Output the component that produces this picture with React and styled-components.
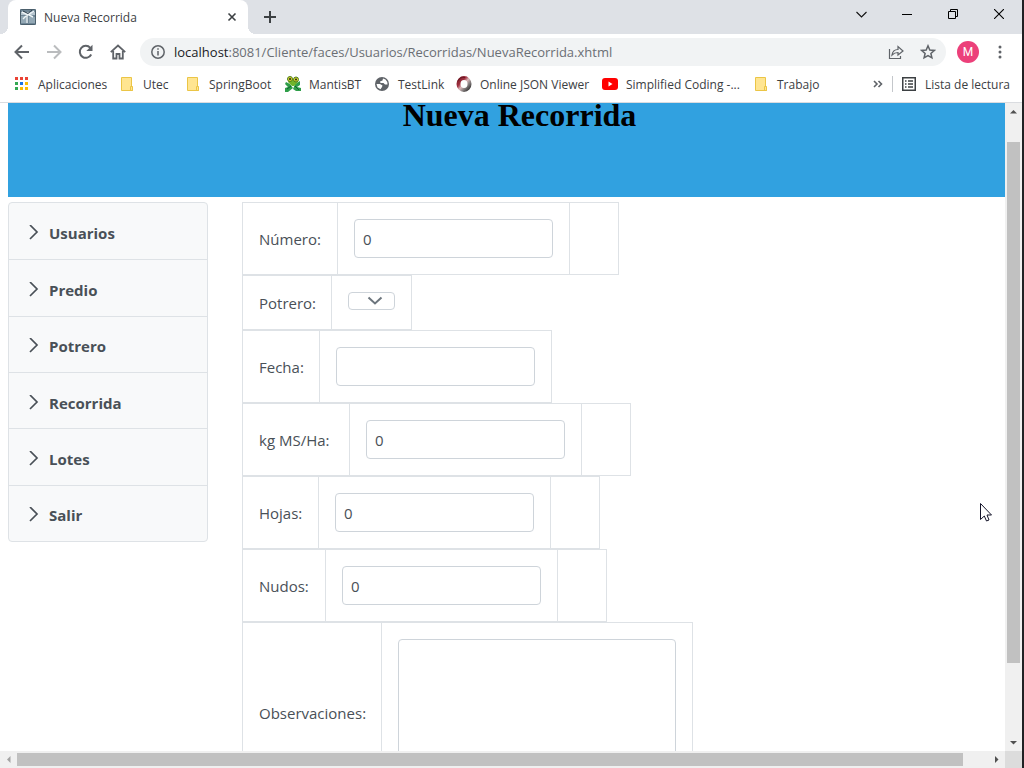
import React from "react";
import styled, { createGlobalStyle } from "styled-components";

const GlobalStyle = createGlobalStyle`
  *, *::before, *::after { box-sizing: border-box; }
  body { margin: 0; background: #fff; }
  button, input, select, textarea { font: inherit; color: inherit; margin: 0; }
  button { padding: 0; border: 0; background: none; }
  svg { display: block; flex: none; }
`;

const Window = styled.div`
  display: flex;
  flex-direction: column;
  height: 100vh;
  border-right: 2px solid #202124;
  background: #fff;
  color: #3c4043;
  font-family: "Open Sans", "Noto Sans", sans-serif;
  font-size: 12px;
`;

/* ---------- browser chrome ---------- */

const TabStrip = styled.div`
  display: flex;
  flex: none;
  height: 34px;
  padding-left: 8px;
  background: #dee1e6;
`;

const Tab = styled.div`
  position: relative;
  display: flex;
  align-items: center;
  width: 240px;
  padding: 0 8px 0 12px;
  border-radius: 8px 8px 0 0;
  background: #fff;

  &::before, &::after {
    content: "";
    position: absolute;
    bottom: 0;
    width: 8px;
    height: 8px;
  }
  &::before {
    left: -8px;
    background: radial-gradient(circle at 0 0, #dee1e6 8px, #fff 8px);
  }
  &::after {
    right: -8px;
    background: radial-gradient(circle at 100% 0, #dee1e6 8px, #fff 8px);
  }
`;

const TabTitle = styled.span`
  flex: 1;
  margin-left: 8px;
`;

const IconButton = styled.button`
  display: flex;
  flex: none;
  align-items: center;
  justify-content: center;
  width: ${(p) => p.$width || 32}px;
  height: ${(p) => p.$height || 28}px;
  color: ${(p) => p.$color || "#5f6368"};
`;

const WindowControls = styled.div`
  display: flex;
  margin-left: auto;
`;

const Toolbar = styled.div`
  display: flex;
  flex: none;
  align-items: center;
  height: 36px;
  padding: 0 6px;
`;

const AddressBar = styled.div`
  display: flex;
  flex: 1;
  align-items: center;
  height: 28px;
  margin: 0 6px;
  padding: 0 2px 0 10px;
  border-radius: 14px;
  background: #f1f3f4;
`;

const Address = styled.div`
  flex: 1;
  margin-left: 8px;
  color: #6b6f74;
  font-size: 13px;
  white-space: nowrap;
`;

const Host = styled.span`
  color: #202124;
`;

const Avatar = styled.button`
  width: 22px;
  height: 22px;
  margin: 0 5px;
  border-radius: 50%;
  background: #ec407a;
  color: #fff;
  font-family: Roboto, sans-serif;
  font-size: 12px;
  line-height: 22px;
`;

const BookmarkBar = styled.nav`
  display: flex;
  flex: none;
  align-items: center;
  height: 33px;
  padding: 0 12px 4px 14px;
  border-bottom: 1px solid #dadce0;
`;

const Bookmark = styled.a`
  display: flex;
  flex: none;
  align-items: center;
  gap: 8px;
  width: ${(p) => (p.$width ? p.$width + "px" : "auto")};
  color: #3c4043;
  font-size: 12px;
  text-decoration: none;
  white-space: nowrap;
`;

const BookmarkEnd = styled.div`
  display: flex;
  align-items: center;
  gap: 8px;
  margin-left: auto;
`;

const Divider = styled.div`
  width: 1px;
  height: 16px;
  background: #c4c7cb;
`;

/* ---------- scrollable page frame ---------- */

const Frame = styled.div`
  display: grid;
  flex: 1;
  grid-template-columns: minmax(0, 1fr) 17px;
  grid-template-rows: minmax(0, 1fr) 17px;
  min-height: 0;
`;

const Viewport = styled.div`
  position: relative;
  overflow: hidden;
`;

const ScrollBar = styled.div`
  display: flex;
  flex-direction: ${(p) => (p.$vertical ? "column" : "row")};
  align-items: center;
  background: #f0f0f0;
`;

const ScrollArrow = styled.div`
  display: flex;
  flex: none;
  align-items: center;
  justify-content: center;
  width: 17px;
  height: 17px;
  color: ${(p) => (p.$disabled ? "#a3a3a3" : "#505050")};
`;

const Track = styled.div`
  flex: ${(p) => p.$share} 0 0;
`;

const Thumb = styled.div`
  flex: ${(p) => p.$share} 0 0;
  width: 13px;
  height: 13px;
  background: #c1c1c1;
`;

const Corner = styled.div`
  background: #dcdcdc;
`;

/* ---------- page ---------- */

const Page = styled.div`
  width: calc(100% + 26px);
  padding-left: 8px;
`;

const Banner = styled.header`
  height: 94px;
  background: #31a1e0;
`;

const Title = styled.h1`
  margin: 0;
  color: #000;
  font-family: "Liberation Serif", serif;
  font-size: 32px;
  font-weight: bold;
  line-height: 24px;
  text-align: center;
`;

const Columns = styled.div`
  display: flex;
  align-items: flex-start;
  gap: 34px;
  padding-top: 5px;
  color: #495057;
  font-size: 15px;
`;

const Menu = styled.nav`
  display: grid;
  flex: none;
  grid-auto-rows: 1fr;
  width: 200px;
  height: 340px;
  border: 1px solid #dee2e6;
  border-radius: 4px;
  background: #f8f9fa;
`;

const MenuItem = styled.a`
  display: flex;
  align-items: center;
  gap: 8px;
  padding: 4px 20px 0 16px;
  color: #495057;
  font-weight: 700;
  text-decoration: none;

  & + & { border-top: 1px solid #dee2e6; }
`;

const Form = styled.form`
  display: flex;
  flex-direction: column;
  align-items: flex-start;
`;

const Row = styled.div`
  display: flex;
  border: 1px solid #dee2e6;
`;

const LabelCell = styled.label`
  display: flex;
  align-items: center;
  width: ${(p) => p.$width}px;
  padding-left: 16px;
  white-space: nowrap;
`;

const Cell = styled.div`
  padding: 16px;
  border-left: 1px solid #dee2e6;
`;

const MessageSlot = styled.div`
  width: 16px;
`;

const TextBox = styled.input`
  display: block;
  width: 199px;
  height: 39px;
  padding: 0 8px;
  border: 1px solid #ced4da;
  border-radius: 4px;
  background: #fff;
`;

const SelectWrap = styled.div`
  position: relative;
  height: 21px;
`;

const Select = styled.select`
  display: block;
  width: 47px;
  height: 18px;
  border: 1px solid #ced4da;
  border-radius: 4px;
  background: #fff;
  appearance: none;
`;

const SelectArrow = styled.svg`
  position: absolute;
  top: 4px;
  right: 12px;
  pointer-events: none;
`;

const TextArea = styled.textarea`
  display: block;
  width: 278px;
  height: 147px;
  padding: 8px;
  border: 1px solid #ced4da;
  border-radius: 4px;
  resize: none;
`;

const Pointer = styled.svg`
  position: absolute;
  right: 13px;
  top: 400px;
`;

/* ---------- icons ---------- */

const Line = ({ size = 16, width = 2, d, children, ...rest }) => (
  <svg width={size} height={size} viewBox={`0 0 ${size} ${size}`} fill="none" stroke="currentColor" strokeWidth={width} {...rest}>
    {d && <path d={d} />}
    {children}
  </svg>
);

const Favicon = () => (
  <svg width="16" height="16" viewBox="0 0 16 16">
    <rect width="16" height="16" rx="1" fill="#6f8696" />
    <path d="M0 3H16V6H0Z" fill="#b5c4ce" />
    <path d="M1 7L6 7V14H1ZM9 8H15V14H9Z" fill="#93a8b5" />
    <path d="M2 3L8 6L14 2M7 6V14M9 6L13 8M6 7L3 10" stroke="#eef4f7" strokeWidth="1.4" fill="none" />
    <path d="M3 2L8 4.500L12 1" stroke="#31414e" strokeWidth="1" fill="none" />
    <rect x=".5" y=".5" width="15" height="15" rx="1" fill="none" stroke="#4b5f6c" />
  </svg>
);

const AppsIcon = () => {
  const colors = ["#ea4335", "#ea4335", "#ea4335", "#34a853", "#1a73e8", "#fbbc04", "#34a853", "#fbbc04", "#fbbc04"];
  return (
    <svg width="16" height="16" viewBox="0 0 16 16">
      {colors.map((c, i) => (
        <rect key={i} x={1 + (i % 3) * 5} y={1 + Math.floor(i / 3) * 5} width="3" height="3" fill={c} />
      ))}
    </svg>
  );
};

const FolderIcon = () => (
  <svg width="16" height="16" viewBox="0 0 16 16">
    <path d="M2.500 1.500H12.500V11H13.500V14.500H2.500Z" fill="#ffe591" stroke="#ebc546" />
    <path d="M11.500 14V10.500H13.500V14.500H11Z" fill="#ffe591" stroke="#ebc546" />
  </svg>
);

const MantisIcon = () => (
  <svg width="16" height="16" viewBox="0 0 16 16">
    <path d="M1 6L5 8L8 12L3 16H0V12L3 11L0 8ZM15 5L10 8L8 13L11 15H16V12L12 11L15 9Z" fill="#2e9e49" />
    <path d="M4 3H12L13 6L9 10H7L3 6Z" fill="#70b52b" />
    <circle cx="5" cy="3" r="2.500" fill="#d9d82b" stroke="#4f7b1d" />
    <circle cx="11" cy="3.500" r="2.500" fill="#d9d82b" stroke="#4f7b1d" />
    <circle cx="5" cy="3" r="1" fill="#222" />
    <circle cx="11" cy="3.500" r="1" fill="#222" />
    <path d="M2 13L6 10M10 10L14 14" stroke="#125d31" />
  </svg>
);

const GlobeIcon = () => (
  <svg width="16" height="16" viewBox="0 0 16 16">
    <circle cx="8" cy="8" r="7" fill="#5f6368" />
    <path d="M9 2.500L8.500 4.500L6 5.500L6.500 7H9.500L11 8.500H13.500L13.300 6L11.500 3.500ZM2.500 8H6L8.500 9.500L8 11L6.500 13.300L3.500 11.500Z" fill="#fff" />
  </svg>
);

const JsonIcon = () => (
  <svg width="16" height="16" viewBox="0 0 16 16" fill="none">
    <defs>
      <linearGradient id="ring" x1="0" y1="0" x2="1" y2="1">
        <stop offset="0" stopColor="#7a1f2a" />
        <stop offset=".3" stopColor="#a03040" />
        <stop offset=".5" stopColor="#dcb8ba" />
        <stop offset=".7" stopColor="#8d8585" />
        <stop offset="1" stopColor="#2f2f2f" />
      </linearGradient>
    </defs>
    <ellipse cx="8" cy="8" rx="5.500" ry="6" stroke="url(#ring)" strokeWidth="4" />
    <path d="M2 5C3 2 6 .8 9 1.500" stroke="#6d1522" strokeWidth="1" />
  </svg>
);

const YouTubeIcon = () => (
  <svg width="16" height="16" viewBox="0 0 16 16">
    <rect y="2" width="16" height="12" rx="3" fill="#f00" />
    <path d="M6.500 5.500V10.500L10.500 8Z" fill="#fff" />
  </svg>
);

const ListIcon = () => (
  <Line size={16} width={1.5}>
    <rect x="1.750" y="1.750" width="12.500" height="12.500" />
    <path d="M4 5H5.500M4 8H5.500M4 11H5.500M7 5H12M7 8H12M7 11H12" />
  </Line>
);

const Arrow = ({ d }) => (
  <svg width="7" height="7" viewBox="0 0 7 7"><path d={d} fill="currentColor" /></svg>
);

/* ---------- data ---------- */

const bookmarks = [
  { name: "Aplicaciones", Icon: AppsIcon, width: 105 },
  { name: "Utec", Icon: FolderIcon, width: 66 },
  { name: "SpringBoot", Icon: FolderIcon, width: 100 },
  { name: "MantisBT", Icon: MantisIcon, width: 89 },
  { name: "TestLink", Icon: GlobeIcon, width: 82 },
  { name: "Online JSON Viewer", Icon: JsonIcon, width: 146 },
  { name: "Simplified Coding -...", Icon: YouTubeIcon, width: 151 },
  { name: "Trabajo", Icon: FolderIcon },
];

const menu = ["Usuarios", "Predio", "Potrero", "Recorrida", "Lotes", "Salir"];

const fields = [
  { id: "numero", label: "Número:", width: 94, value: "0", message: true },
  { id: "potrero", label: "Potrero:", width: 88, kind: "select" },
  { id: "fecha", label: "Fecha:", width: 76, value: "" },
  { id: "kg", label: "kg MS/Ha:", width: 106, value: "0", message: true },
  { id: "hojas", label: "Hojas:", width: 75, value: "0", message: true },
  { id: "nudos", label: "Nudos:", width: 82, value: "0", message: true },
  { id: "observaciones", label: "Observaciones:", width: 138, kind: "area" },
];

function Control({ field }) {
  if (field.kind === "select") {
    return (
      <SelectWrap>
        <Select id={field.id} />
        <SelectArrow width="16" height="10" viewBox="0 0 16 10" fill="none" stroke="#6c757d" strokeWidth="2">
          <path d="M1.500 1.500L8 7.500L14.500 1.500" />
        </SelectArrow>
      </SelectWrap>
    );
  }
  if (field.kind === "area") return <TextArea id={field.id} />;
  return <TextBox id={field.id} type="text" defaultValue={field.value} />;
}

export default function App() {
  return (
    <Window>
      <GlobalStyle />
      <TabStrip>
        <Tab>
          <Favicon />
          <TabTitle>Nueva Recorrida</TabTitle>
          <IconButton $width={16} aria-label="Cerrar pestaña" $color="#3c4043">
            <Line size={10} width={1.6} d="M1.500 1.500L8.500 8.500M8.500 1.500L1.500 8.500" />
          </IconButton>
        </Tab>
        <IconButton $width={44} $height={34} aria-label="Nueva pestaña" $color="#3c4043">
          <Line size={12} width={2} d="M6 0V12M0 6H12" />
        </IconButton>
        <WindowControls>
          <IconButton $width={46} aria-label="Buscar pestañas" $color="#111">
            <Line size={11} width={1.1} d="M.5 3L5.500 8L10.500 3" />
          </IconButton>
          <IconButton $width={46} aria-label="Minimizar" $color="#000">
            <Line size={10} width={1} d="M0 5.500H10" />
          </IconButton>
          <IconButton $width={46} aria-label="Restaurar" $color="#000">
            <Line size={10} width={1} d="M.5 2.500H7.500V9.500H.5ZM2.500 2.500V.5H9.500V7.500H7.500" />
          </IconButton>
          <IconButton $width={46} aria-label="Cerrar" $color="#000">
            <Line size={10} width={1.1} d="M0 0L10 10M10 0L0 10" />
          </IconButton>
        </WindowControls>
      </TabStrip>

      <Toolbar>
        <IconButton aria-label="Atrás">
          <Line d="M15 8H2M8 1.500L1.500 8L8 14.500" />
        </IconButton>
        <IconButton aria-label="Adelante" $color="#babcbe">
          <Line d="M1 8H14M8 1.500L14.500 8L8 14.500" />
        </IconButton>
        <IconButton aria-label="Recargar">
          <Line d="M13.200 10.500A6 6 0 1 1 12.300 3.800">
            <path d="M14.500 .8V7H8.300Z" fill="currentColor" stroke="none" />
          </Line>
        </IconButton>
        <IconButton aria-label="Inicio">
          <Line width={1.8} d="M.8 8.200L8 1.500L15.200 8.200M3.200 7V14.500H6.500V10H9.500V14.500H12.800V7" />
        </IconButton>
        <AddressBar>
          <Line width={1.5} color="#5f6368">
            <circle cx="8" cy="8" r="6.200" />
            <path d="M8 7V11.500M8 4.300V5.800" />
          </Line>
          <Address><Host>localhost</Host>:8081/Cliente/faces/Usuarios/Recorridas/NuevaRecorrida.xhtml</Address>
          <IconButton aria-label="Compartir">
            <Line width={1.2} d="M1.500 5V14.500H12.500V12M4 11C4.500 7.500 7 5.500 10 5.500V2.500L15 7L10 11V8.500C7 8.500 5.500 9.500 4 11Z" />
          </IconButton>
          <IconButton aria-label="Marcador">
            <Line width={1.5} d="M8 1.800L9.800 6L14.300 6.400L10.900 9.400L11.900 13.800L8 11.500L4.100 13.800L5.100 9.400L1.700 6.400L6.200 6Z" />
          </IconButton>
        </AddressBar>
        <Avatar>M</Avatar>
        <IconButton aria-label="Menú">
          <svg width="4" height="14" viewBox="0 0 4 14" fill="currentColor">
            <circle cx="2" cy="2" r="1.500" /><circle cx="2" cy="7" r="1.500" /><circle cx="2" cy="12" r="1.500" />
          </svg>
        </IconButton>
      </Toolbar>

      <BookmarkBar>
        {bookmarks.map(({ name, Icon, width }) => (
          <Bookmark key={name} href="#" $width={width}><Icon />{name}</Bookmark>
        ))}
        <BookmarkEnd>
          <IconButton $width={12} $height={16} aria-label="Más marcadores">
            <Line size={10} width={1.6} d="M1 2L4 5L1 8M5.500 2L8.500 5L5.500 8" />
          </IconButton>
          <Divider />
          <Bookmark href="#"><ListIcon />Lista de lectura</Bookmark>
        </BookmarkEnd>
      </BookmarkBar>

      <Frame>
        <Viewport>
          <Page>
            <Banner><Title>Nueva Recorrida</Title></Banner>
            <Columns>
              <Menu>
                {menu.map((name) => (
                  <MenuItem key={name} href="#">
                    <Line size={16} width={1.7} d="M5 0L12 7L5 14" />
                    {name}
                  </MenuItem>
                ))}
              </Menu>
              <Form>
                {fields.map((field) => (
                  <Row key={field.id}>
                    <LabelCell htmlFor={field.id} $width={field.width}>{field.label}</LabelCell>
                    <Cell><Control field={field} /></Cell>
                    {field.message && <Cell><MessageSlot /></Cell>}
                  </Row>
                ))}
              </Form>
            </Columns>
          </Page>
          <Pointer width="12" height="20" viewBox="0 0 12 20" fill="#fff" stroke="#15152a">
            <path d="M.5 .5V16.500L4.300 13L6.500 18L9 17L7 12H11.500Z" />
          </Pointer>
        </Viewport>
        <ScrollBar $vertical>
          <ScrollArrow><Arrow d="M0 5.500L3.500 2L7 5.500Z" /></ScrollArrow>
          <Track $share={22} />
          <Thumb $share={521} />
          <Track $share={71} />
          <ScrollArrow><Arrow d="M0 2L3.500 5.500L7 2Z" /></ScrollArrow>
        </ScrollBar>
        <ScrollBar>
          <ScrollArrow $disabled><Arrow d="M5.500 0L2 3.500L5.500 7Z" /></ScrollArrow>
          <Thumb $share={946} />
          <Track $share={25} />
          <ScrollArrow><Arrow d="M2 0L5.500 3.500L2 7Z" /></ScrollArrow>
        </ScrollBar>
        <Corner />
      </Frame>
    </Window>
  );
}
